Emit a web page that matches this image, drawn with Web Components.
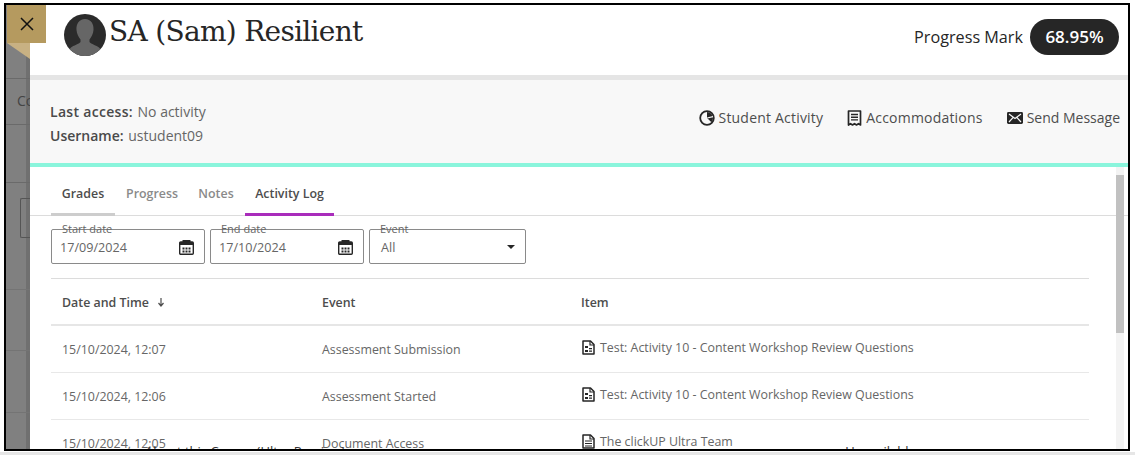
<!DOCTYPE html>
<html lang="en"><head><meta charset="utf-8"><title>Student</title>
<style>
html,body{margin:0;padding:0;height:455px;overflow:hidden}
html{background:linear-gradient(#fff 0,#fff 452px,#e6e6e6 452px)}
body{font-family:"Open Sans","Liberation Sans",sans-serif;color:#262626}
</style></head><body>
<x-frame>
  <x-gutter slot="gutter"></x-gutter>
  <x-student-head name="SA (Sam) Resilient" mark="68.95%"></x-student-head>
  <x-info-bar access="No activity" username="ustudent09"></x-info-bar>
  <x-log-view></x-log-view>
</x-frame>
<script>
const ICONS={
 activity:'<svg width="16" height="16" viewBox="0 0 16 16"><circle cx="8" cy="8" r="6.800" fill="none" stroke="#262626" stroke-width="1.800"/><path d="M8 2v6l4.400 4.200A6 6 0 0 0 14 8 6 6 0 0 0 8 2z" fill="#262626"/><path d="M8.200 8 14 6.600" stroke="#f8f8f8" stroke-width="1.200"/></svg>',
 doc:'<svg width="15" height="16" viewBox="0 0 15 16"><path d="M1.500 1h12v14l-2-1.400-2 1.400-2-1.400-2 1.400-2-1.400-2 1.400z" fill="none" stroke="#262626" stroke-width="1.700" stroke-linejoin="round"/><path d="M4 4.500h7M4 7.200h7M4 9.900h7" stroke="#262626" stroke-width="1.400"/></svg>',
 mail:'<svg width="16" height="12" viewBox="0 0 16 12"><rect width="16" height="12" rx="1.400" fill="#262626"/><path d="M2 2l6 4.600L14 2M2 10l4.200-4.600M14 10 9.800 5.400" fill="none" stroke="#f8f8f8" stroke-width="1.200"/></svg>',
 cal:'<svg width="15" height="15" viewBox="0 0 15 15"><path d="M3.500 0h8v2h-8z" fill="#262626"/><rect x=".7" y="2" width="13.600" height="12.300" rx="1" fill="none" stroke="#262626" stroke-width="1.400"/><path d="M1 2h13v3H1z" fill="#262626"/><path d="M3.500 7.500h2v2h-2zM6.500 7.500h2v2h-2zM9.500 7.500h2v2h-2zM3.500 10.500h2v2h-2zM6.500 10.500h2v2h-2zM9.500 10.500h2v2h-2z" fill="#262626"/></svg>',
 test:'<svg width="13" height="15" viewBox="0 0 13 15"><path d="M1 1h7.500L12 4.500V14H1z" fill="none" stroke="#262626" stroke-width="1.500" stroke-linejoin="round"/><path d="M8 1v4h4" fill="none" stroke="#262626" stroke-width="1.200"/><path d="M3 6h3v2H3zM7 8h3v1.200H7zM3 10h3v2H3zM7 10.500h3v1.200H7z" fill="#262626"/></svg>',
 page:'<svg width="13" height="15" viewBox="0 0 13 15"><path d="M1 1h7.500L12 4.500V14H1z" fill="none" stroke="#262626" stroke-width="1.500" stroke-linejoin="round"/><path d="M8 1v4h4" fill="none" stroke="#262626" stroke-width="1.200"/><path d="M3 7h7M3 9.500h7M3 12h7" stroke="#262626" stroke-width="1.200"/></svg>'
};
function def(name,css,html){
 customElements.define(name,class extends HTMLElement{
  connectedCallback(){
   if(this.shadowRoot)return;
   const r=this.attachShadow({mode:'open'});
   const a=n=>this.getAttribute(n)||'';
   r.innerHTML='<style>'+css+'</style>'+(typeof html==='function'?html(a):html);
  }
 });
}
def('x-frame',`
 :host{display:block;box-sizing:border-box;width:1126px;height:448px;margin:3px 0 0 4px;border:2px solid #000;position:relative;overflow:hidden;background:#808080}
 .wrap{display:flex;height:100%}
 .g{flex:0 0 24px;width:24px;min-width:0;overflow:hidden}
 .p{flex:1;min-width:0;background:#fff;display:flex;flex-direction:column;height:100%;overflow:hidden}
 .x{position:absolute;left:1px;top:0;width:39px;height:38px;background:#b59a5f;display:flex;align-items:center;justify-content:center}
 .f{position:absolute;left:1px;top:38px;width:23px;height:16px;background:#c8b183;clip-path:polygon(0 0,100% 0,100% 100%)}
`,`<div class="wrap"><div class="g"><slot name="gutter"></slot></div><div class="p"><slot></slot></div></div>
 <div class="f"></div>
 <div class="x" role="button" aria-label="Close"><svg width="14" height="14" viewBox="0 0 14 14"><path d="M1 1l12 12M13 1 1 13" stroke="#111" stroke-width="1.500"/></svg></div>`);
def('x-gutter',`
 :host{display:block;width:24px;height:100%;background:linear-gradient(90deg,#808080 0,#808080 20px,#707070 20px);color:#444;font-size:14px;overflow:hidden}
 div{box-sizing:border-box;border-bottom:1px solid #6a6a6a}
 .co{padding:12px 0 0 11px;height:46px;white-space:nowrap;overflow:hidden}
 .box{height:58px}
 .b{border:1px solid #555;border-right:0;margin:15px 0 0 14px;height:40px;border-radius:2px 0 0 2px}
 .l{border-bottom-color:#747474}
`,`<div style="height:74px"></div><div class="co">Co</div><div class="box"></div><div class="b"></div><div class="l" style="height:52px"></div><div class="l" style="height:61px"></div><div class="l" style="height:62px"></div>`);
def('x-student-head',`
 :host{display:flex;align-items:center;flex:0 0 70px;box-sizing:border-box;height:70px;padding:0 9px 6px 34px;background:#fff}
 svg{flex:none;margin-right:3px;margin-top:-5px}
 h1{margin:-11px 0 0;font:400 28px/36px "DejaVu Serif","Liberation Serif",serif;letter-spacing:-.7px;color:#262626;flex:1;white-space:nowrap}
 .l{font-size:16.200px;margin-right:7px;color:#262626;margin-top:-1px}
 .m{box-sizing:border-box;width:89px;height:36px;border-radius:18px;background:#262626;color:#fff;font-size:17px;font-weight:600;display:flex;align-items:center;justify-content:center;margin-top:-1px}
`,a=>`<svg width="42" height="42" viewBox="0 0 42 42"><defs><clipPath id="c"><circle cx="21" cy="21" r="21"/></clipPath></defs><circle cx="21" cy="21" r="21" fill="#2b2b2b"/><g clip-path="url(#c)" fill="#666"><path d="M21 5c-6 0-9 5-8.500 11 .3 4 2 7 4 9.500V28c-1.500 2-7 3.500-9.500 5.500C5 35 4 42 4 42h34s-1-7-3-8.500C32.500 31.500 27 30 25.500 28v-2.500c2-2.500 3.700-5.500 4-9.500C30 10 27 5 21 5z"/></g></svg>
 <h1>${a('name')}</h1><span class="l">Progress Mark</span><span class="m">${a('mark')}</span>`);
def('x-info-bar',`
 :host{display:flex;flex:0 0 92px;box-sizing:border-box;height:92px;border-top:5px solid #e5e5e5;border-bottom:4px solid #8af5dc;background:#f8f8f8;padding:0 8px 0 20px;align-items:center;justify-content:space-between;font-size:14px;color:#666}
 .i{line-height:24px;margin-top:5px}
 b{font-weight:600;color:#4a4a4a;margin-right:1px}
 .la{letter-spacing:.3px}
 .a{display:flex;gap:24px;margin-top:-8px;font-size:14px;letter-spacing:.2px;color:#4d4d4d;font-weight:400}
 .a span{display:flex;align-items:center;gap:4px;white-space:nowrap}
 .a span:last-child{letter-spacing:0}
 svg{flex:none}
`,a=>`<div class="i"><div><b class="la">Last access:</b> ${a('access')}</div><div><b>Username:</b> ${a('username')}</div></div>
 <div class="a"><span>${ICONS.activity}Student Activity</span><span>${ICONS.doc}Accommodations</span><span>${ICONS.mail}Send Message</span></div>`);
def('x-tabs',`
 :host{display:flex;box-sizing:border-box;height:49px;border-bottom:1px solid #dcdcdc;padding-left:21px;font-size:12.400px;font-weight:600;color:#8a8a8a}
 span{display:flex;align-items:center;justify-content:center;height:49px;box-sizing:border-box;padding-top:7px;border-bottom:3px solid transparent;white-space:nowrap}
 .g{width:64px;color:#4d4d4d;border-bottom-color:#cdcdcd}
 .p{width:74px}.n{width:56px;margin-left:-1px}
 .a{width:89px;margin-left:1px;color:#4d4d4d;border-bottom-color:#a92cbb}
`,`<span class="g">Grades</span><span class="p">Progress</span><span class="n">Notes</span><span class="a">Activity Log</span>`);
def('x-field',`
 :host{display:block;position:relative;box-sizing:border-box;height:35px;border:1px solid #8a8a8a;border-radius:2px;background:#fff;font-size:12.600px;color:#666}
 .l{position:absolute;left:10px;top:-8px;font-size:11px;line-height:13px;color:#666;white-space:nowrap}
 .r{display:flex;align-items:center;justify-content:space-between;height:100%;padding:1px 10px 0 8px;box-sizing:border-box}
 .s{padding-left:11px;padding-right:10px}
 .t{width:0;height:0;border:4px solid transparent;border-top-color:#262626;border-bottom:0}
 svg{flex:none}
`,a=>`<span class="l">${a('label')}</span><div class="r ${a('kind')==='select'?'s':''}"><span>${a('value')}</span>${a('kind')==='select'?'<i class="t"></i>':ICONS.cal}</div>`);
def('x-log-row',`
 :host{display:grid;grid-template-columns:260px 259px 1fr;box-sizing:border-box;height:47px;border-bottom:1px solid #e8e8e8;align-items:center;padding-left:11px;font-size:12.400px;color:#666}
 .i{display:flex;align-items:center;gap:5px;margin-top:-3px;margin-left:1px;white-space:nowrap}
 svg{flex:none}
`,a=>`<span>${a('date')}</span><span>${a('event')}</span><span class="i">${ICONS[a('icon')]}${a('item')}</span>`);
def('x-log-view',`
 :host{display:block;flex:1;min-height:0;position:relative;overflow:hidden}
 .f{display:flex;gap:5px;padding:13px 0 0 21px}
 .f x-field:nth-child(-n+2){width:154px}
 .f x-field:nth-child(3){width:157px}
 .t{margin:14px 0 0 21px;width:1038px;border-top:1px solid #dcdcdc}
 .h{display:grid;grid-template-columns:260px 259px 1fr;height:47px;box-sizing:border-box;border-bottom:2px solid #e6e6e6;align-items:center;padding:2px 0 0 11px;font-size:12.400px;font-weight:600;color:#4d4d4d}
 .sb{position:absolute;right:4px;top:0;bottom:0;width:8px;background:#f3f3f3;padding-top:8px;box-sizing:border-box}
 .th{height:158px;background:#c1c1c1}
 .cut{position:absolute;left:0;right:0;bottom:-10px;font-size:13px;line-height:16px;color:#333;display:flex;pointer-events:none}
 .cut span{white-space:nowrap}
`,`<x-tabs></x-tabs>
 <div class="f"><x-field label="Start date" value="17/09/2024"></x-field><x-field label="End date" value="17/10/2024"></x-field><x-field label="Event" value="All" kind="select"></x-field></div>
 <div class="t"><div class="h"><span>Date and Time <svg width="8" height="9" viewBox="0 0 8 9" style="margin-left:5px"><path d="M4 0v7M1.500 5 4 8l2.500-3" fill="none" stroke="#4d4d4d" stroke-width="1.200"/></svg></span><span>Event</span><span>Item</span></div>
 <x-log-row date="15/10/2024, 12:07" event="Assessment Submission" icon="test" item="Test: Activity 10 - Content Workshop Review Questions"></x-log-row>
 <x-log-row date="15/10/2024, 12:06" event="Assessment Started" icon="test" item="Test: Activity 10 - Content Workshop Review Questions"></x-log-row>
 <x-log-row date="15/10/2024, 12:05" event="Document Access" icon="page" item="The clickUP Ultra Team"></x-log-row></div>
 <div class="sb"><div class="th"></div></div>
 <div class="cut"><span style="margin-left:115px">About this Course (Ultra Preview)</span><span style="margin-left:500px">Unavailable</span></div>`);
</script>
</body></html>
